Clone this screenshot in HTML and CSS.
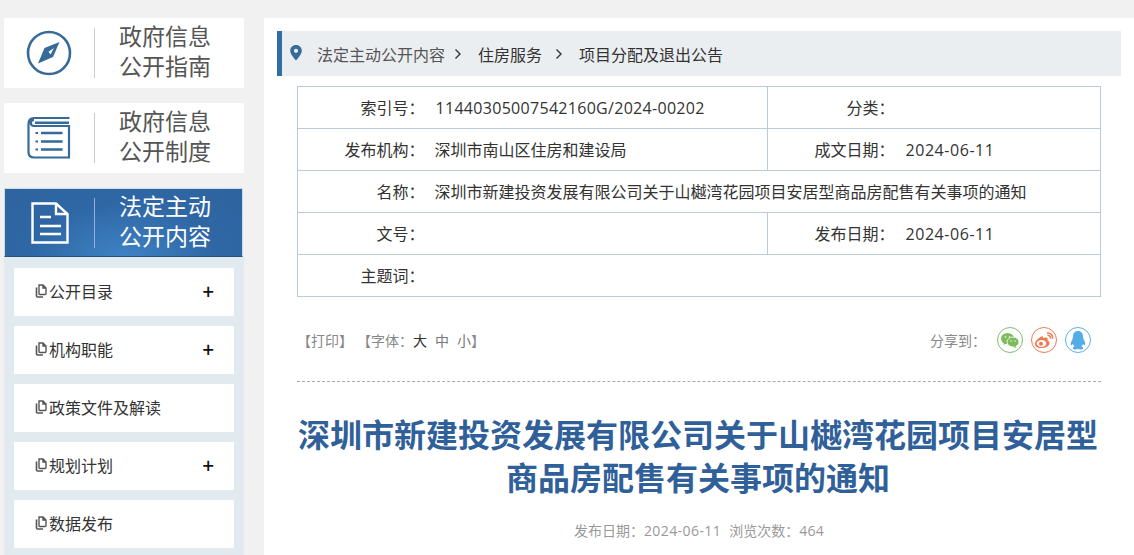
FILE: index.html
```html
<!DOCTYPE html>
<html lang="zh-CN">
<head>
<meta charset="utf-8">
<title>项目分配及退出公告</title>
<link rel="stylesheet" href="styles.css">
</head>
<body>
<div class="page">
  <aside class="side">
    <a class="card">
      <span class="card-icon">
        <svg width="46" height="46" viewBox="0 0 46 46"><circle cx="23" cy="23" r="21" fill="none" stroke="#356a99" stroke-width="2.6"/><path d="M33.500 12 L27 27 L12 33.500 L18.500 18 Z" fill="#356a99"/><path d="M28 18 L22.500 21.800 L24.500 24.500 Z" fill="#fff"/></svg>
      </span>
      <span class="card-title">政府信息<br>公开指南</span>
    </a>
    <a class="card">
      <span class="card-icon">
        <svg width="44" height="44" viewBox="0 0 44 44"><path d="M42.500 2 H7 Q1.500 2 1.500 8 V36 Q1.500 41.500 7 41.500 H42 V10 H7 Q3.800 10 3.800 7 Q3.800 4 7 4" fill="none" stroke="#356a99" stroke-width="2.200"/><path d="M8 6.700 H42" stroke="#356a99" stroke-width="2.400"/><path d="M14 17 H35.500 M14 25.500 H35.500 M14 33.500 H35.500" stroke="#356a99" stroke-width="2.600"/><path d="M8.500 17 H11 M8.500 25.500 H11 M8.500 33.500 H11" stroke="#356a99" stroke-width="2.200"/></svg>
      </span>
      <span class="card-title">政府信息<br>公开制度</span>
    </a>
    <a class="card card-active">
      <span class="card-icon">
        <svg width="38" height="42" viewBox="0 0 38 42"><path d="M1.500 1.500 H25 L36.500 12 V40.500 H1.500 Z" fill="none" stroke="#fff" stroke-width="2.400"/><path d="M25 1.500 V12 H36.500" fill="none" stroke="#fff" stroke-width="2.400"/><path d="M9 15 H20 M9 24 H30 M9 32 H30" stroke="#fff" stroke-width="2.600"/></svg>
      </span>
      <span class="card-title">法定主动<br>公开内容</span>
    </a>
    <ul class="menu">
      <li class="menu-item"><span class="menu-label"><svg class="copy" width="12" height="14" viewBox="0 0 12 14"><path d="M4 9.500 V1 H8 L11 4 V9.500 Q11 10.500 10 10.500 H5 Q4 10.500 4 9.500 Z M8 1 V4 H11" fill="none" stroke="#555" stroke-width="1.400"/><path d="M1.500 3.500 V12 Q1.500 13 2.500 13 H8" fill="none" stroke="#555" stroke-width="1.600"/></svg>公开目录</span><span class="plus">+</span></li>
      <li class="menu-item"><span class="menu-label"><svg class="copy" width="12" height="14" viewBox="0 0 12 14"><path d="M4 9.500 V1 H8 L11 4 V9.500 Q11 10.500 10 10.500 H5 Q4 10.500 4 9.500 Z M8 1 V4 H11" fill="none" stroke="#555" stroke-width="1.400"/><path d="M1.500 3.500 V12 Q1.500 13 2.500 13 H8" fill="none" stroke="#555" stroke-width="1.600"/></svg>机构职能</span><span class="plus">+</span></li>
      <li class="menu-item"><span class="menu-label"><svg class="copy" width="12" height="14" viewBox="0 0 12 14"><path d="M4 9.500 V1 H8 L11 4 V9.500 Q11 10.500 10 10.500 H5 Q4 10.500 4 9.500 Z M8 1 V4 H11" fill="none" stroke="#555" stroke-width="1.400"/><path d="M1.500 3.500 V12 Q1.500 13 2.500 13 H8" fill="none" stroke="#555" stroke-width="1.600"/></svg>政策文件及解读</span></li>
      <li class="menu-item"><span class="menu-label"><svg class="copy" width="12" height="14" viewBox="0 0 12 14"><path d="M4 9.500 V1 H8 L11 4 V9.500 Q11 10.500 10 10.500 H5 Q4 10.500 4 9.500 Z M8 1 V4 H11" fill="none" stroke="#555" stroke-width="1.400"/><path d="M1.500 3.500 V12 Q1.500 13 2.500 13 H8" fill="none" stroke="#555" stroke-width="1.600"/></svg>规划计划</span><span class="plus">+</span></li>
      <li class="menu-item"><span class="menu-label"><svg class="copy" width="12" height="14" viewBox="0 0 12 14"><path d="M4 9.500 V1 H8 L11 4 V9.500 Q11 10.500 10 10.500 H5 Q4 10.500 4 9.500 Z M8 1 V4 H11" fill="none" stroke="#555" stroke-width="1.400"/><path d="M1.500 3.500 V12 Q1.500 13 2.500 13 H8" fill="none" stroke="#555" stroke-width="1.600"/></svg>数据发布</span></li>
    </ul>
  </aside>
  <main class="main">
    <nav class="crumb">
      <svg class="pin" width="12" height="16" viewBox="0 0 12 16"><path fill-rule="evenodd" d="M6 0 C2.700 0 0.200 2.500 0.200 5.700 C0.200 9.500 6 15.500 6 15.500 C6 15.500 11.800 9.500 11.800 5.700 C11.800 2.500 9.300 0 6 0 Z M6 3.700 A2.100 2.100 0 1 1 6 7.900 A2.100 2.100 0 1 1 6 3.700 Z" fill="#356a99"/></svg>
      <span class="crumb-first">法定主动公开内容</span>
      <svg class="chev" width="8" height="12" viewBox="0 0 8 12"><path d="M1.500 1.500 L6 6 L1.500 10.500" fill="none" stroke="#333" stroke-width="1.400"/></svg>
      <span class="crumb-link">住房服务</span>
      <svg class="chev chev-2" width="8" height="12" viewBox="0 0 8 12"><path d="M1.500 1.500 L6 6 L1.500 10.500" fill="none" stroke="#333" stroke-width="1.400"/></svg>
      <span class="crumb-link">项目分配及退出公告</span>
    </nav>
    <table class="info">
      <colgroup><col class="c1"><col class="c2"><col class="c3"><col class="c4"></colgroup>
      <tr><th>索引号：</th><td><span class="num code">11440305007542160G/2024-00202</span></td><th>分类：</th><td></td></tr>
      <tr><th>发布机构：</th><td>深圳市南山区住房和建设局</td><th>成文日期：</th><td><span class="num date">2024-06-11</span></td></tr>
      <tr><th>名称：</th><td colspan="3">深圳市新建投资发展有限公司关于山樾湾花园项目安居型商品房配售有关事项的通知</td></tr>
      <tr><th>文号：</th><td></td><th>发布日期：</th><td><span class="num date">2024-06-11</span></td></tr>
      <tr><th>主题词：</th><td colspan="3"></td></tr>
    </table>
    <div class="tools">
      <div class="tools-left"><span class="t-print">【打印】</span><span>【字体：</span><span class="size">大</span><span class="size-g">中</span><span class="size-g">小</span><span>】</span></div>
      <div class="share">
        <span class="share-label">分享到：</span>
        <span class="share-btn wx"><svg width="18" height="15" viewBox="0 0 18 15"><ellipse cx="6.500" cy="5.500" rx="6.500" ry="5.500" fill="#7dbb5c"/><path d="M3 9 L2.500 12 L6 10 Z" fill="#7dbb5c"/><ellipse cx="12" cy="9" rx="6" ry="5" fill="#7dbb5c" stroke="#fff" stroke-width="0.800"/><path d="M14.500 13 L15.500 15 L12 14 Z" fill="#7dbb5c"/><circle cx="4.500" cy="4" r="0.800" fill="#fff"/><circle cx="8.500" cy="4" r="0.800" fill="#fff"/><circle cx="10" cy="8" r="0.700" fill="#fff"/><circle cx="14" cy="8" r="0.700" fill="#fff"/></svg></span>
        <span class="share-btn wb"><svg width="20" height="17" viewBox="0 0 20 17"><path d="M7.500 4.500 C3.500 6.500 0.500 10 1 12.500 C1.500 15.500 5.500 16.500 9 16 C13 15.500 16 13 15.500 10.500 C15.200 9.200 14 9 13.500 8.500 C14 7 13.800 5.500 12 5.500 C10.500 5.500 9.500 6 9 6.300 C9.300 4.500 8.800 4 7.500 4.500 Z" fill="#ef7a4f"/><ellipse cx="7.500" cy="11.500" rx="4.800" ry="3.400" fill="#fff"/><circle cx="7" cy="11.700" r="2" fill="#ef7a4f"/><path d="M13 1 C16.500 0.500 19 3 18.500 7 M13.500 3.500 C15.500 3 16.800 4.500 16.200 6.500" fill="none" stroke="#ef7a4f" stroke-width="1.500"/></svg></span>
        <span class="share-btn qq"><svg width="16" height="19" viewBox="0 0 16 19"><path d="M8 0 C4.500 0 3 2.500 3 5.500 C3 7 2.500 8 1.500 10 C0.500 12 0.500 14 1.200 14.200 C1.800 14.300 2.500 13.500 3 12.700 C3.200 14 4 15 4.500 15.500 C3.500 16 2.500 16.500 2.800 17.500 C3.200 18.800 6.500 18.700 8 18 C9.500 18.700 12.800 18.800 13.200 17.500 C13.500 16.500 12.500 16 11.500 15.500 C12 15 12.800 14 13 12.700 C13.500 13.500 14.200 14.300 14.800 14.200 C15.500 14 15.500 12 14.500 10 C13.500 8 13 7 13 5.500 C13 2.500 11.500 0 8 0 Z" fill="#55ade6"/></svg></span>
      </div>
    </div>
    <h1 class="title">深圳市新建投资发展有限公司关于山樾湾花园项目安居型商品房配售有关事项的通知</h1>
    <p class="meta">发布日期：<span class="num meta-date">2024-06-11</span><span class="views">浏览次数：<span class="num">464</span></span></p>
  </main>
</div>
</body>
</html>
```
FILE: styles.css
```css
* { box-sizing: border-box; }
html, body { margin: 0; height: 555px; overflow: hidden; }
body { background: #f1f1f1; font-family: "Noto Sans CJK SC", "Liberation Sans", sans-serif; color: #333; }
.page { display: flex; gap: 20px; padding: 18px 0 0 4px; height: 555px; }

.side { width: 240px; flex: none; display: flex; flex-direction: column; }
.card { display: flex; flex: none; align-items: center; height: 70px; background: #fff; margin-bottom: 15px; }
.card-icon { width: 91px; height: 50px; border-right: 1px solid #ccc; display: flex; align-items: center; justify-content: center; flex: none; }
.card-title { margin-left: 24px; margin-bottom: 6px; font-size: 23px; line-height: 30px; color: #555; }
.card-active { height: 69px; margin: 0 1px 0 0; background: radial-gradient(ellipse at 50% 100%, #3e82c4 0%, #2f67a5 55%, #2d649f 100%); border: 1px solid #c9dcec; border-bottom: 1px solid #24517f; }
.card-active .card-icon { width: 90px; border-right-color: #8fb3d6; }
.card-active .card-title { color: #fff; }

.menu { list-style: none; margin: 0; padding: 11px 10px 0; background: #e1ebef; flex: 1; }
.menu-item { display: flex; align-items: center; justify-content: space-between; height: 48px; background: #fff; margin-bottom: 10px; padding: 0 20px 2px; font-size: 16px; color: #333; }
.menu-label { display: flex; align-items: center; }
.copy { margin: 0 2px 0 1px; }
.plus { font-size: 20px; font-weight: 500; color: #111; line-height: 1; }

.main { flex: 1; background: #fff; padding: 13px 13px 0 13px; min-width: 0; }
.crumb { display: flex; align-items: center; height: 45px; background: #ebeef1; border-left: 5px solid #2f6fa5; padding-left: 8px; font-size: 16px; color: #333; }
.pin { margin-right: 15px; margin-top: -2px; }
.crumb-first { color: #555; }
.chev { margin: 0 16px 0 9px; }
.chev-2 { margin-left: 13px; }
.crumb-link { color: #333; }

.info { width: 804px; margin: 10px 0 0 20px; border-collapse: collapse; table-layout: fixed; font-size: 16px; color: #333; }
.c1 { width: 128px; }
.c2 { width: 342px; }
.c3 { width: 128px; }
.info th, .info td { height: 42px; border: 1px solid #b7cbd9; padding: 0 0 2px; font-weight: 400; }
.info th { text-align: right; padding-right: 1px; border-right: 0; }
.info td { border-left: 0; padding-left: 9px; white-space: nowrap; }
.num { font-family: "Open Sans", "Noto Sans CJK SC", sans-serif; letter-spacing: 0.3px; }
.code { margin-left: 1px; }
.date { margin-left: 1px; letter-spacing: 0.55px; }
.meta-date { letter-spacing: 0.42px; }

.tools { display: flex; justify-content: space-between; align-items: center; width: 804px; margin-left: 20px; height: 85px; border-bottom: 1px dashed #aaa; padding: 2px 10px 0 0; font-size: 14px; color: #888; }
.tools-left { display: flex; }
.t-print { margin-right: 4px; }
.size { color: #333; margin-right: 8px; }
.size-g { margin-right: 8px; color: #777; }
.size-g + span:not(.size-g) { margin-left: -8px; }
.share { display: flex; align-items: center; gap: 8px; }
.share-label { margin-right: 3px; }
.share-btn { width: 26px; height: 26px; border-radius: 50%; border: 1px solid; display: flex; align-items: center; justify-content: center; }
.wx { border-color: #84bd66; }
.wb { border-color: #ee7c52; }
.qq { border-color: #5fb0e2; }

.title { margin: 30px 0 0 16px; width: 810px; text-align: center; font-size: 32px; line-height: 43px; font-weight: 700; color: #2f6099; }
.meta { margin: 22px 0 0; text-align: center; font-size: 14px; color: #999; }
.views { margin-left: 8px; }
```
